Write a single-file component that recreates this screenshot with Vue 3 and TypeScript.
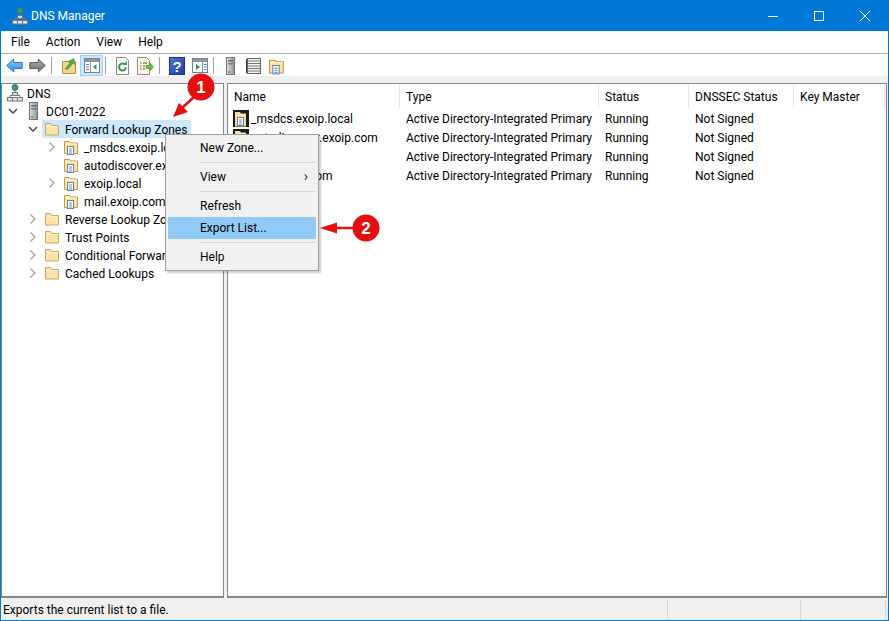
<script setup lang="ts">
interface TreeRow { label: string; depth: number; icon: string; caret?: 'open' | 'closed'; selected?: boolean }
const tree: TreeRow[] = [
  { label: 'DNS', depth: 0, icon: 'net' },
  { label: 'DC01-2022', depth: 1, icon: 'server', caret: 'open' },
  { label: 'Forward Lookup Zones', depth: 2, icon: 'folder', caret: 'open', selected: true },
  { label: '_msdcs.exoip.local', depth: 3, icon: 'zone', caret: 'closed' },
  { label: 'autodiscover.exoip.com', depth: 3, icon: 'zone' },
  { label: 'exoip.local', depth: 3, icon: 'zone', caret: 'closed' },
  { label: 'mail.exoip.com', depth: 3, icon: 'zone' },
  { label: 'Reverse Lookup Zones', depth: 2, icon: 'folder', caret: 'closed' },
  { label: 'Trust Points', depth: 2, icon: 'folder', caret: 'closed' },
  { label: 'Conditional Forwarders', depth: 2, icon: 'folder', caret: 'closed' },
  { label: 'Cached Lookups', depth: 2, icon: 'folder', caret: 'closed' },
]
const columns = [
  { name: 'Name', w: 172 },
  { name: 'Type', w: 199 },
  { name: 'Status', w: 90 },
  { name: 'DNSSEC Status', w: 105 },
  { name: 'Key Master', w: 91 },
]
const zones = ['_msdcs.exoip.local', 'autodiscover.exoip.com', 'exoip.local', 'mail.exoip.com']
const menus = ['File', 'Action', 'View', 'Help']
</script>

<template>
  <div class="window">
    <svg width="0" height="0" class="defs">
      <defs>
        <linearGradient id="g-back" x1="0" y1="0" x2="0" y2="1">
          <stop offset="0" stop-color="#8fd0fa"/><stop offset="1" stop-color="#2a86d8"/>
        </linearGradient>
        <linearGradient id="g-fwd" x1="0" y1="0" x2="0" y2="1">
          <stop offset="0" stop-color="#b0b0b0"/><stop offset="1" stop-color="#6c6c6c"/>
        </linearGradient>
        <linearGradient id="g-help" x1="0" y1="0" x2="1" y2="1">
          <stop offset="0" stop-color="#4d77d6"/><stop offset="1" stop-color="#1f3c9c"/>
        </linearGradient>
        <linearGradient id="g-srv" x1="0" y1="0" x2="1" y2="0">
          <stop offset="0" stop-color="#e6e6e6"/><stop offset="1" stop-color="#8f8f8f"/>
        </linearGradient>
        <symbol id="i-folder" viewBox="0 0 16 16">
          <path d="M1.500 2.500h5l1.500 2h6.500v9.500h-13z" fill="#fbe3a4" stroke="#caa868"/>
          <path d="M2 5.500h12" stroke="#fff3d2"/>
        </symbol>
        <symbol id="i-zone" viewBox="0 0 16 16">
          <path d="M1.500 2.500h5l1.500 1.500h6.500v10.500h-13z" fill="#fbe3a4" stroke="#bd9a57"/>
          <path d="M2 5h12" stroke="#fff3d2"/>
          <rect x="4.500" y="7.500" width="6" height="8" fill="#fff" stroke="#6d8299"/>
          <path d="M6 10h3M6 12h3M6 14h3" stroke="#5b8fcb"/>
        </symbol>
        <symbol id="i-zone-black" viewBox="0 0 16 17">
          <rect width="16" height="17" fill="#1a1a1a"/>
          <path d="M2 2h5l1 1.500h5v13h-11z" fill="#f6dc9c"/>
          <path d="M2 5h11" stroke="#fff3d2"/>
          <rect x="4.500" y="7.500" width="6" height="8" fill="#fff" stroke="#6d8299"/>
          <path d="M6 10h3M6 12h3M6 14h3" stroke="#5b8fcb"/>
        </symbol>
        <symbol id="i-server" viewBox="0 0 16 18">
          <rect x="3.500" y="0.500" width="8" height="17" fill="url(#g-srv)" stroke="#727272"/>
          <rect x="5" y="3" width="5" height="1.500" fill="#666"/>
          <rect x="5" y="6" width="5" height="1.500" fill="#777"/>
          <rect x="5" y="14" width="2" height="2" fill="#47b04b"/>
        </symbol>
        <symbol id="i-net" viewBox="0 0 16 18">
          <circle cx="8" cy="3.500" r="3" fill="#3f9b52" stroke="#2d6da8"/>
          <path d="M8 7v2M3 13v-1.500h10V13" fill="none" stroke="#777"/>
          <rect x="5.500" y="8.500" width="5" height="3" fill="#ddd" stroke="#777"/>
          <rect x="0.500" y="13.500" width="5" height="3.500" fill="#e3e3e3" stroke="#777"/>
          <rect x="5.500" y="13.500" width="5" height="3.500" fill="#e3e3e3" stroke="#777"/>
          <rect x="10.500" y="13.500" width="5" height="3.500" fill="#e3e3e3" stroke="#777"/>
        </symbol>
      </defs>
    </svg>

    <header class="title">
      <svg class="app-icon" width="16" height="18"><use href="#i-net"/></svg>
      <span class="title-text">DNS Manager</span>
      <div class="caption">
        <svg width="46" height="30" viewBox="0 0 46 30"><path d="M18 15.500h10" stroke="#fff"/></svg>
        <svg width="46" height="30" viewBox="0 0 46 30"><rect x="18.500" y="10.500" width="9" height="9" fill="none" stroke="#fff"/></svg>
        <svg width="46" height="30" viewBox="0 0 46 30"><path d="M18 10l10 10M28 10l-10 10" stroke="#fff"/></svg>
      </div>
    </header>

    <nav class="menubar">
      <span v-for="m in menus" :key="m" class="menu">{{ m }}</span>
    </nav>

    <div class="toolbar">
      <button class="tool">
        <svg width="17" height="15" viewBox="0 0 17 15"><path d="M0.700 7.500l7-6.500v3.500h8.500v6H7.700V14z" fill="url(#g-back)" stroke="#2a78c0"/></svg>
      </button>
      <button class="tool">
        <svg width="17" height="15" viewBox="0 0 17 15"><path d="M16.300 7.500l-7-6.500v3.500H0.800v6h8.500V14z" fill="url(#g-fwd)" stroke="#5c5c5c"/></svg>
      </button>
      <i class="tsep"></i>
      <button class="tool">
        <svg width="16" height="17" viewBox="0 0 16 17">
          <path d="M1.500 4.500h13v12h-13z" fill="#f6d488" stroke="#b68f4c"/>
          <path d="M4 12l5-6-2-1.500 6-3 .5 6-1.800-1.200-5 6z" fill="#52ad4c" stroke="#2e7d32" stroke-width="0.500"/>
        </svg>
      </button>
      <button class="tool active">
        <svg width="16" height="15" viewBox="0 0 16 15">
          <rect x="0.500" y="0.500" width="15" height="14" fill="#fff" stroke="#77808c"/>
          <rect x="1" y="1" width="14" height="3" fill="#8b95a3"/>
          <path d="M6.500 4v10" stroke="#8b95a3"/>
          <path d="M2 6.500h3M2 9h3M2 11.500h3" stroke="#5c7ea8"/>
          <path d="M12.500 6v6L9 9z" fill="#2f9c4a"/>
        </svg>
      </button>
      <i class="tsep"></i>
      <button class="tool">
        <svg width="15" height="18" viewBox="0 0 15 18">
          <path d="M1.500 0.500h9l3 3v14h-12z" fill="#fbfbfb" stroke="#8a8a8a"/>
          <path d="M11 10.500a3.500 3.500 0 1 1-1-3" fill="none" stroke="#3a9b45" stroke-width="2"/>
          <path d="M8 8h4V4z" fill="#3a9b45"/>
        </svg>
      </button>
      <button class="tool">
        <svg width="17" height="18" viewBox="0 0 17 18">
          <path d="M0.500 0.500h9l3 3v14h-12z" fill="#fdf6dc" stroke="#8a8a8a"/>
          <path d="M3 6h1.500M6 6h4M3 9h1.500M6 9h2M3 12h1.500M6 12h2" stroke="#555"/>
          <path d="M9 8.500h4V6l3.500 4-3.500 4v-2.500H9z" fill="#67b945" stroke="#3f8b29" stroke-width="0.500"/>
        </svg>
      </button>
      <i class="tsep"></i>
      <button class="tool">
        <svg width="16" height="18" viewBox="0 0 16 18">
          <rect x="0.500" y="0.500" width="15" height="17" fill="url(#g-help)" stroke="#1b3384"/>
          <text x="8" y="14.500" text-anchor="middle" class="q">?</text>
        </svg>
      </button>
      <button class="tool">
        <svg width="16" height="15" viewBox="0 0 16 15">
          <rect x="0.500" y="0.500" width="15" height="14" fill="#fff" stroke="#77808c"/>
          <rect x="1" y="1" width="14" height="3" fill="#8b95a3"/>
          <path d="M10.500 4v10" stroke="#8b95a3"/>
          <path d="M12 6.500h2.500M12 9h2.500M12 11.500h2.500" stroke="#3f7fd0"/>
          <path d="M4 6v6l4-3z" fill="#2f9c4a"/>
        </svg>
      </button>
      <i class="tsep"></i>
      <button class="tool"><svg width="16" height="18"><use href="#i-server"/></svg></button>
      <button class="tool">
        <svg width="15" height="16" viewBox="0 0 15 16">
          <rect x="1.500" y="0.500" width="13" height="15" fill="#f4f4f4" stroke="#666"/>
          <path d="M2 3h12M2 5.500h12M2 8h12M2 10.500h12M2 13h12" stroke="#777"/>
          <path d="M0.500 1v14" stroke="#333"/>
        </svg>
      </button>
      <button class="tool"><svg width="17" height="18"><use href="#i-zone"/></svg></button>
    </div>

    <main class="panes">
      <section class="tree">
        <div v-for="r in tree" :key="r.label" class="tree-row" :class="`d${r.depth}`">
          <span class="caret">
            <svg v-if="r.caret === 'open'" width="10" height="10" viewBox="0 0 10 10"><path d="M1 3l4 4 4-4" fill="none" stroke="#404040" stroke-width="1.400"/></svg>
            <svg v-else-if="r.caret === 'closed'" width="10" height="10" viewBox="0 0 10 10"><path d="M2.500 0.500l4.500 4.500-4.500 4.500" fill="none" stroke="#a6a6a6" stroke-width="1.400"/></svg>
          </span>
          <span class="node" :class="{ selected: r.selected }">
            <svg class="node-icon" :class="`k-${r.icon}`"><use :href="`#i-${r.icon}`"/></svg>
            <span class="node-label">{{ r.label }}</span>
          </span>
        </div>
      </section>

      <section class="list">
        <div class="list-head">
          <span v-for="c in columns" :key="c.name" class="col" :style="{ width: c.w + 'px' }">{{ c.name }}</span>
        </div>
        <div v-for="z in zones" :key="z" class="list-row">
          <span class="cell name" :style="{ width: columns[0].w + 'px' }">
            <svg class="list-icon" width="16" height="17"><use href="#i-zone-black"/></svg>{{ z }}
          </span>
          <span class="cell" :style="{ width: columns[1].w + 'px' }">Active Directory-Integrated Primary</span>
          <span class="cell" :style="{ width: columns[2].w + 'px' }">Running</span>
          <span class="cell" :style="{ width: columns[3].w + 'px' }">Not Signed</span>
        </div>
      </section>
    </main>

    <footer class="status">
      <span class="status-text">Exports the current list to a file.</span>
      <i class="ssep"></i><i class="ssep"></i><i class="ssep"></i>
    </footer>

    <div class="ctx">
      <div class="ctx-item">New Zone...</div>
      <div class="ctx-sep"></div>
      <div class="ctx-item">View<span class="chev">›</span></div>
      <div class="ctx-sep"></div>
      <div class="ctx-item">Refresh</div>
      <div class="ctx-item hl">Export List...</div>
      <div class="ctx-sep"></div>
      <div class="ctx-item">Help</div>
    </div>

    <svg class="notes" width="889" height="621" viewBox="0 0 889 621">
      <path d="M195 96L182 108" stroke="#e60f0f" stroke-width="2.500"/>
      <path d="M173 117l6-14 9 9z" fill="#e60f0f"/>
      <circle cx="201" cy="87" r="13.500" fill="#e60f0f"/>
      <text x="201" y="93" class="badge">1</text>
      <path d="M354 228H334" stroke="#e60f0f" stroke-width="2.500"/>
      <path d="M320 228l17-5.500v11z" fill="#e60f0f"/>
      <circle cx="366" cy="228" r="13.500" fill="#e60f0f"/>
      <text x="366" y="234" class="badge">2</text>
    </svg>
  </div>
</template>

<style>
html, body { margin: 0; padding: 0; background: #fff; }
</style>

<style scoped>
.window {
  position: relative;
  width: 889px;
  height: 621px;
  box-sizing: border-box;
  border: 1px solid #0078d7;
  border-top: 0;
  display: flex;
  flex-direction: column;
  overflow: hidden;
  font: 12px Roboto, sans-serif;
  color: #000;
  background: #f0f0f0;
}
.defs { position: absolute; }
.title {
  height: 31px;
  flex: none;
  background: #0078d7;
  display: flex;
  align-items: center;
  padding-left: 11px;
  color: #fff;
}
.title-text { margin-left: 3px; }
.caption { margin-left: auto; display: flex; }
.caption svg { display: block; }
.menubar {
  height: 22px;
  flex: none;
  background: #fff;
  border-bottom: 1px solid #a9a9b5;
  display: flex;
  align-items: center;
  padding-left: 2px;
}
.menu { padding: 0 8px; }
.toolbar {
  height: 21px;
  padding: 1px 0 0 2px;
  flex: none;
  background: #fff;
  display: flex;
  align-items: flex-start;
}
.tool {
  width: 23px;
  height: 21px;
  padding: 0;
  border: 1px solid transparent;
  background: none;
  display: flex;
  align-items: center;
  justify-content: center;
  box-sizing: border-box;
}
.tool.active { background: #cce8ff; border-color: #99d1ff; }
.tsep { width: 1px; height: 17px; background: #a0a0a0; margin: 2px 5px 0 2px; flex: none; }
.q { font: bold 15px "Liberation Sans", sans-serif; fill: #fff; }
.panes {
  flex: 1;
  min-height: 0;
  display: flex;
  gap: 3px;
  padding-top: 7px;
  background: #f0f0f0;
}
.tree, .list {
  background: #fff;
  border: 1px solid #828790;
  border-bottom-width: 2px;
  box-sizing: border-box;
}
.tree { width: 223px; flex: none; }
.list { flex: 1; min-width: 0; margin-right: 1px; }
.tree-row { height: 18px; display: flex; align-items: center; white-space: nowrap; }
.caret { width: 14px; height: 10px; flex: none; display: flex; justify-content: center; margin-right: 2px; }
.d0 { padding-left: 5px; }
.d0 .caret { display: none; }
.d1 { padding-left: 4px; }
.d2 { padding-left: 24px; }
.d3 { padding-left: 43px; }
.node { display: flex; align-items: center; height: 18px; padding: 0 4px 0 2px; }
.d0 .node { padding-left: 0; }
.d1 .node { padding-left: 4px; }
.node.selected { background: #cce8ff; }
.node-icon { flex: none; width: 16px; height: 16px; margin-right: 5px; }
.node-icon.k-net { height: 18px; margin-right: 4px; }
.node-icon.k-server { height: 18px; margin-right: 4px; }
.node-label { padding-top: 2px; }
.list-head { height: 25px; display: flex; }
.col {
  box-sizing: border-box;
  padding: 1px 0 0 6px;
  margin-top: 1px;
  border-right: 1px solid #e5e5e5;
  height: 23px;
  line-height: 23px;
  flex: none;
}
.list-row { height: 19px; display: flex; align-items: center; white-space: nowrap; }
.cell { box-sizing: border-box; padding-left: 6px; flex: none; }
.cell.name { display: flex; align-items: center; padding-left: 5px; }
.list-icon { margin-right: 2px; flex: none; }
.status {
  height: 22px;
  flex: none;
  display: flex;
  align-items: center;
  background: #f0f0f0;
  padding-left: 2px;
}
.status-text { width: 664px; flex: none; padding-top: 2px; }
.ssep { width: 1px; height: 19px; background: #d6d6d6; flex: none; margin-right: 132px; }
.ssep:nth-of-type(2) { margin-right: 84px; }
.ctx {
  position: absolute;
  left: 164px;
  top: 134px;
  width: 154px;
  height: 137px;
  box-sizing: border-box;
  padding: 2px;
  background: #f0f0f0;
  border: 1px solid #a0a0a0;
  box-shadow: 2px 2px 2px rgba(0, 0, 0, 0.2);
}
.ctx-item {
  height: 22px;
  line-height: 22px;
  padding-left: 32px;
  position: relative;
}
.ctx-item.hl { background: #91c9f7; }
.ctx-sep { height: 1px; background: #d7d7d7; margin: 3px 1px 3px 32px; }
.chev { position: absolute; right: 8px; top: -1px; color: #333; font-size: 14px; }
.notes { position: absolute; left: -1px; top: 0; pointer-events: none; }
.badge { font: bold 17px "Liberation Sans", sans-serif; fill: #fff; text-anchor: middle; }
</style>
